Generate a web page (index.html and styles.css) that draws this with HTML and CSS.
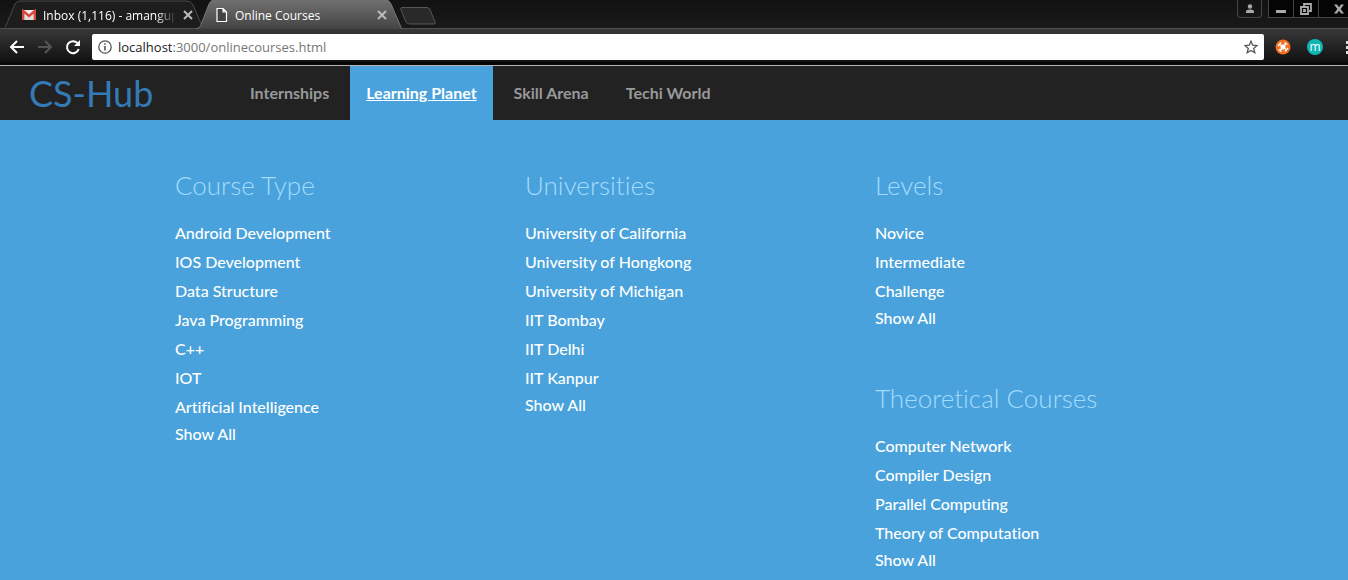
FILE: index.html
```html
<!DOCTYPE html>
<html lang="en">
<head>
<meta charset="utf-8">
<title>Online Courses</title>
<link rel="stylesheet" href="styles.css">
</head>
<body>
<div class="browser">
  <div class="tabstrip">
    <div class="tab">
      <svg class="tab-shape" viewBox="0 0 200 28" preserveAspectRatio="none" aria-hidden="true"><path d="M0 28 10 4Q12 1 15 1H182Q186 1 188 5L198 28" fill="#1d1d1d" stroke="#4a4a4a"/></svg>
      <svg class="tab-icon" width="14" height="12" viewBox="0 0 14 12" aria-hidden="true"><path d="M0 1h14v10H0z" fill="#eee"/><path d="M3 11V5l4 3 4-3v6" fill="#ddd"/><path d="M1.200 11V2L7 7l5.800-5v9" fill="none" stroke="#d8453a" stroke-width="2.400"/></svg>
      <button class="tab-title tab-title-faded">Inbox (1,116) - amangup</button>
      <button class="tab-close" aria-label="Close Inbox"><svg width="10" height="10" viewBox="0 0 10 10"><path d="M1 1l8 8M9 1l-8 8"/></svg></button>
    </div>
    <div class="tab tab-active">
      <svg class="tab-shape" viewBox="0 0 206 29" preserveAspectRatio="none" aria-hidden="true"><defs><linearGradient id="active" x2="0" y2="1"><stop stop-color="#707070"/><stop offset="1" stop-color="#444"/></linearGradient></defs><path d="M0 29Q4 28 5 25L13 4Q15 0 18 0H190Q193 0 195 4L204 25Q205 28 206 29z" fill="url(#active)"/><path d="M0 29Q4 28 5 25L13 4Q15 0 18 0M190 0Q193 0 195 4L204 25Q205 28 206 29" fill="none" stroke="#777"/></svg>
      <svg class="tab-icon" width="12" height="14" viewBox="0 0 12 14" aria-hidden="true"><path d="M1 .5h6L10.500 4v9.500H1zM7 .5V4h3.500" fill="#444" stroke="#fff" stroke-width="1.200"/></svg>
      <button class="tab-title">Online Courses</button>
      <button class="tab-close" aria-label="Close Online Courses"><svg width="10" height="10" viewBox="0 0 10 10"><path d="M1 1l8 8M9 1l-8 8"/></svg></button>
    </div>
    <button class="new-tab" aria-label="New tab"><svg width="36" height="18" viewBox="0 0 36 18"><path d="M2 .5h25q2 0 3 2L35 15q1 2-1 2H10q-3 0-4-2L1 3Q0 .5 2 .5z" fill="#292929" stroke="#565656"/></svg></button>
    <div class="window-controls">
      <button class="account" aria-label="Account"><svg width="10" height="9" viewBox="0 0 10 9"><circle cx="5" cy="2.500" r="2.200" fill="#aaa"/><path d="M1 9V7.500q0-2 4-2t4 2V9z" fill="#aaa"/></svg></button>
      <button class="window-button" aria-label="Minimize"><svg width="10" height="12" viewBox="0 0 10 12"><path d="M0 7h10v3H0z" fill="#aaa"/></svg></button>
      <button class="window-button" aria-label="Restore"><svg width="12" height="12" viewBox="0 0 12 12"><path d="M4 3V1h7v7H9M1 4h7v7H1zM4 7h1v1H4z" fill="none" stroke="#aaa" stroke-width="1.800"/></svg></button>
      <button class="window-button window-close" aria-label="Close window"><svg width="10" height="10" viewBox="0 0 10 10"><path d="M0 .5h3l2 2.800L7 .5h3L6.600 5 10 9.500H7L5 6.700 3 9.500H0L3.400 5z" fill="#aaa"/></svg></button>
    </div>
  </div>
  <div class="toolbar">
    <button class="tool" aria-label="Back"><svg width="16" height="14" viewBox="0 0 16 14"><path d="M15 7H2M8 1 2 7l6 6" fill="none" stroke="#fff" stroke-width="2"/></svg></button>
    <button class="tool" aria-label="Forward"><svg width="16" height="14" viewBox="0 0 16 14"><path d="M1 7h13M8 1l6 6-6 6" fill="none" stroke="#555" stroke-width="2"/></svg></button>
    <button class="tool" aria-label="Reload"><svg width="16" height="16" viewBox="0 0 16 16"><path d="M12.500 4.200A6 6 0 1 0 13.700 10" fill="none" stroke="#fff" stroke-width="2"/><path d="M15 1v6H9z" fill="#fff"/></svg></button>
    <div class="address">
      <svg width="14" height="14" viewBox="0 0 14 14" aria-hidden="true"><circle cx="7" cy="7" r="6.200" fill="none" stroke="#555" stroke-width="1.300"/><path d="M6.200 6h1.600v4.500H6.200zM6.200 3.300h1.600v1.500H6.200z" fill="#555"/></svg>
      <span class="url"><span class="host">localhost</span>:3000/onlinecourses.html</span>
      <button class="star" aria-label="Bookmark"><svg width="14" height="14" viewBox="0 0 14 14"><path d="M7 1.200 8.700 5.200 13 5.500 9.700 8.400 10.800 12.700 7 10.400 3.200 12.700 4.300 8.400 1 5.500 5.300 5.200z" fill="none" stroke="#555" stroke-width="1.300"/></svg></button>
    </div>
    <button class="extension" aria-label="Extension"><svg width="16" height="16" viewBox="0 0 16 16"><circle cx="8" cy="8" r="7.500" fill="#f36f21"/><circle cx="8" cy="8" r="2.500" fill="#fff"/><path d="M4.500 5l7 6M11 4.500l-6 7M3 7l3-3.500M10 12.500l3-3.500M9.500 3.500l3 2M3.500 10.500l3 2" stroke="#fff" stroke-width="1.300"/></svg></button>
    <button class="extension extension-m">m</button>
    <button class="menu" aria-label="Menu"><svg width="3" height="13" viewBox="0 0 3 13"><path d="M0 0h3v3H0zM0 5h3v3H0zM0 10h3v3H0z" fill="#ddd"/></svg></button>
  </div>
</div>
<header class="site-header">
  <a class="brand" href="#">CS-Hub</a>
  <nav class="site-nav">
    <a class="nav-link" href="#">Internships</a>
    <a class="nav-link nav-link-active" href="#">Learning Planet</a>
    <a class="nav-link" href="#">Skill Arena</a>
    <a class="nav-link" href="#">Techi World</a>
  </nav>
</header>
<main class="catalog">
  <section class="group">
    <h2 class="group-title">Course Type</h2>
    <ul class="links">
      <li><a href="#">Android Development</a></li>
      <li><a href="#">IOS Development</a></li>
      <li><a href="#">Data Structure</a></li>
      <li><a href="#">Java Programming</a></li>
      <li><a href="#">C++</a></li>
      <li><a href="#">IOT</a></li>
      <li><a href="#">Artificial Intelligence</a></li>
    </ul>
    <a class="show-all" href="#">Show All</a>
  </section>
  <section class="group">
    <h2 class="group-title">Universities</h2>
    <ul class="links">
      <li><a href="#">University of California</a></li>
      <li><a href="#">University of Hongkong</a></li>
      <li><a href="#">University of Michigan</a></li>
      <li><a href="#">IIT Bombay</a></li>
      <li><a href="#">IIT Delhi</a></li>
      <li><a href="#">IIT Kanpur</a></li>
    </ul>
    <a class="show-all" href="#">Show All</a>
  </section>
  <div class="column">
    <section class="group">
      <h2 class="group-title">Levels</h2>
      <ul class="links">
        <li><a href="#">Novice</a></li>
        <li><a href="#">Intermediate</a></li>
        <li><a href="#">Challenge</a></li>
      </ul>
      <a class="show-all" href="#">Show All</a>
    </section>
    <section class="group">
      <h2 class="group-title">Theoretical Courses</h2>
      <ul class="links">
        <li><a href="#">Computer Network</a></li>
        <li><a href="#">Compiler Design</a></li>
        <li><a href="#">Parallel Computing</a></li>
        <li><a href="#">Theory of Computation</a></li>
      </ul>
      <a class="show-all" href="#">Show All</a>
    </section>
  </div>
</main>
</body>
</html>
```

FILE: styles.css
```css
* { box-sizing: border-box; }
body {
  margin: 0;
  background: #49a2db;
  font-family: Lato, "Liberation Sans", sans-serif;
  font-size: 16px;
  font-variant-ligatures: no-common-ligatures;
}
a { color: inherit; text-decoration: none; }
button {
  margin: 0;
  padding: 0;
  border: 0;
  background: none;
  color: inherit;
  font: inherit;
}
svg { display: block; flex: none; }

.browser {
  background: #080808;
  border-bottom: 1px solid #b5b5b5;
  padding-bottom: 3px;
  font-family: "Open Sans", sans-serif;
  font-size: 12px;
  color: #fff;
}
.tabstrip {
  display: flex;
  height: 28px;
  padding-left: 5px;
  background: linear-gradient(#121212, #191919);
}
.tab {
  position: relative;
  display: flex;
  align-items: center;
  gap: 7px;
  width: 200px;
  height: 28px;
  padding: 2px 12px 0 17px;
}
.tab-active {
  width: 206px;
  height: 29px;
  margin-left: -9px;
  padding: 1px 15px 0 20px;
}
.tab-shape {
  position: absolute;
  inset: 0;
  width: 100%;
  height: 100%;
}
.tab-icon, .tab-title, .tab-close { position: relative; }
.tab-title {
  flex: 1;
  overflow: hidden;
  text-align: left;
  white-space: nowrap;
}
.tab-title-faded {
  -webkit-mask-image: linear-gradient(to right, #000 85%, transparent);
  mask-image: linear-gradient(to right, #000 85%, transparent);
}
.tab-close path { stroke: #bbb; stroke-width: 2; }
.new-tab { align-self: center; padding-top: 3px; margin-left: -2px; }
.window-controls {
  display: flex;
  align-items: flex-start;
  margin-left: auto;
}
.account, .window-button {
  display: flex;
  align-items: center;
  justify-content: center;
  width: 25px;
  height: 18px;
  border: 1px solid #444;
  border-top: 0;
}
.account { margin-right: 6px; border-radius: 0 0 4px 4px; }
.window-button { background: #050505; border-right: 0; }
.window-close { width: 30px; padding-left: 10px; }

.toolbar {
  display: flex;
  align-items: center;
  gap: 12px;
  height: 34px;
  padding: 3px 0 0 9px;
  border-top: 1px solid #505050;
  background: linear-gradient(#383838, #111);
}
.address {
  display: flex;
  flex: 1;
  align-items: center;
  gap: 6px;
  height: 26px;
  margin: 0 -1px;
  padding: 0 6px;
  border-radius: 2px;
  background: #fff;
  color: #777;
  font-size: 13px;
}
.host { color: #222; }
.star { margin-left: auto; }
.extension-m {
  width: 16px;
  height: 16px;
  margin-left: 4px;
  border-radius: 50%;
  background: #10b5b5;
  line-height: 14px;
}
.menu { width: 13px; padding-left: 11px; overflow: hidden; }

.site-header {
  display: flex;
  height: 54px;
  background: #222;
}
.brand {
  width: 234px;
  padding-left: 29px;
  color: #337ab7;
  font-size: 36px;
  line-height: 54px;
}
.site-nav { display: flex; gap: 5px; }
.nav-link {
  padding: 0 16px;
  color: #999;
  font-weight: 700;
  line-height: 54px;
}
.nav-link-active {
  background: #49a2db;
  color: #fff;
  text-decoration: underline;
}

.catalog {
  display: grid;
  grid-template-columns: repeat(3, minmax(0, 1fr));
  padding: 47px 123px 6px 175px;
  color: #fff;
  font-weight: 500;
}
.column {
  display: flex;
  flex-direction: column;
  gap: 50px;
}
.group-title {
  margin: 0 0 15px;
  color: #a3dcff;
  font-size: 26px;
  font-weight: 300;
  line-height: 36px;
}
.links { margin: 0; padding: 0; list-style: none; line-height: 29px; }
.show-all { display: block; line-height: 25px; }
```
